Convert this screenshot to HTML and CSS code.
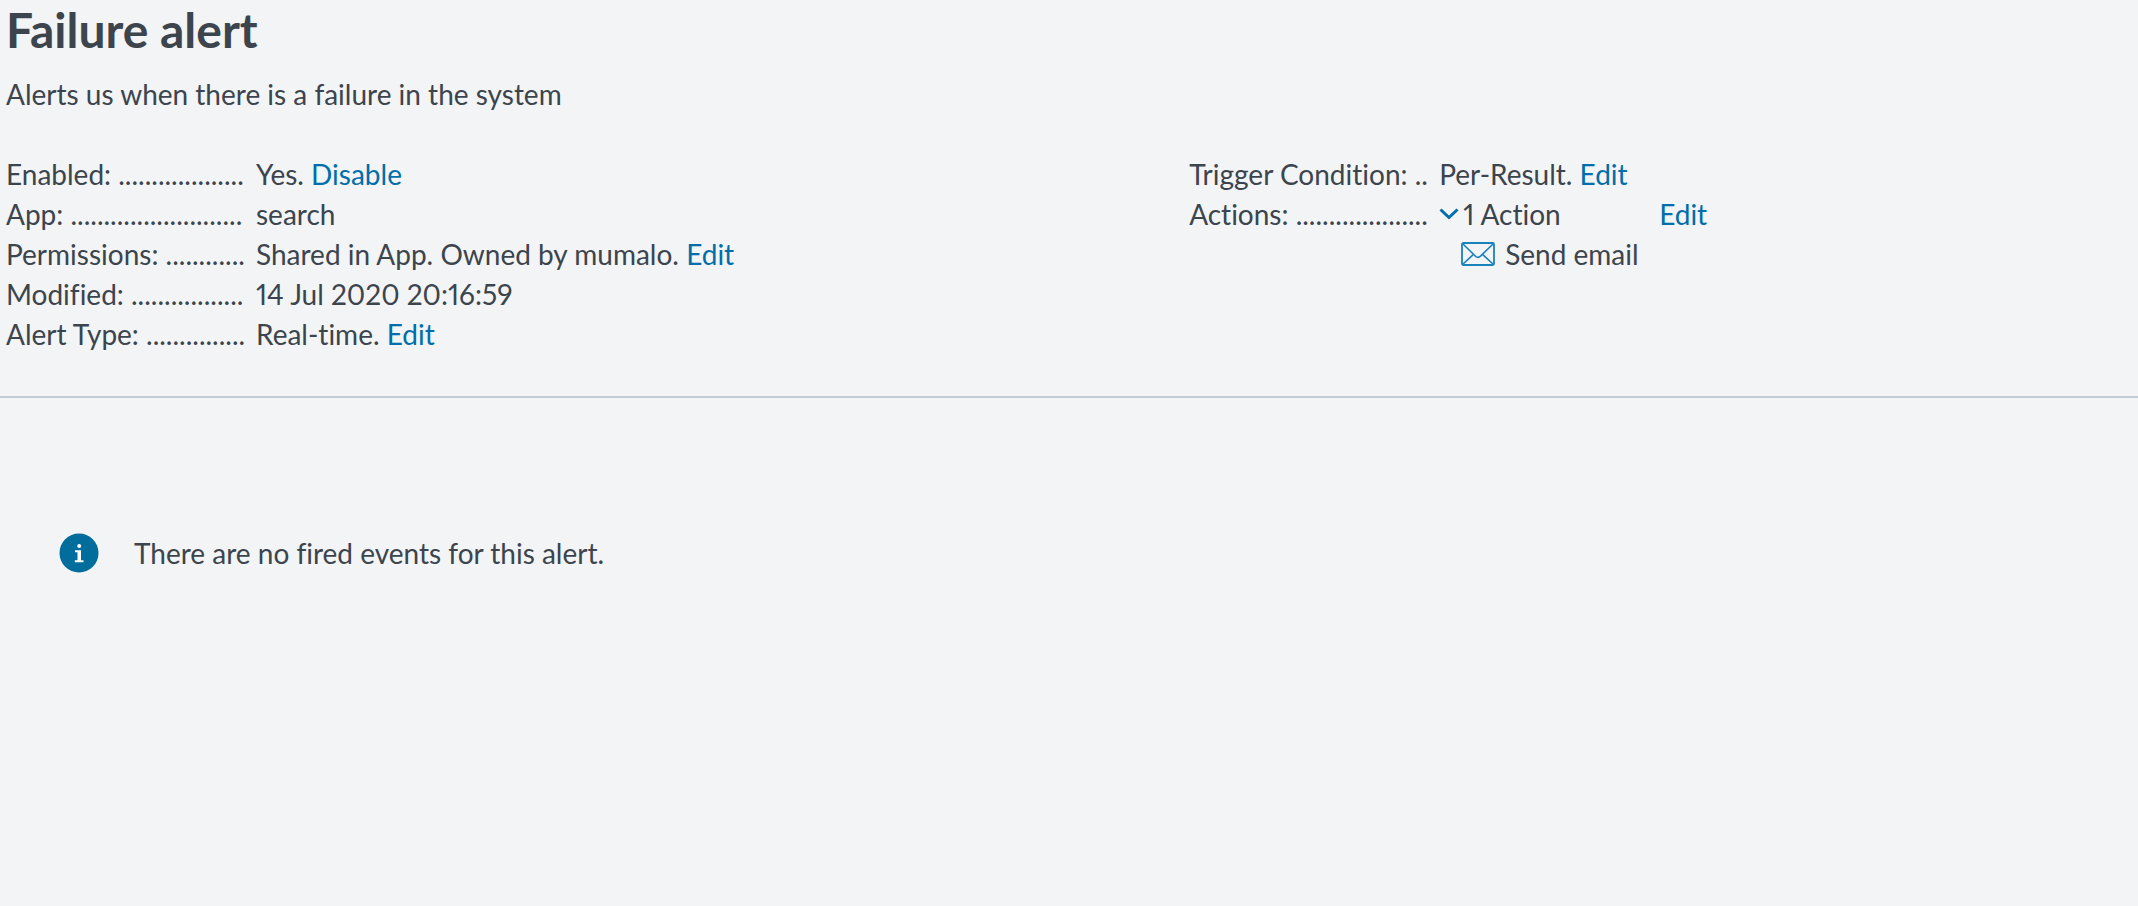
FILE: index.html
```html
<!DOCTYPE html>
<html lang="en">
<head>
<meta charset="utf-8">
<meta name="viewport" content="width=device-width, initial-scale=1">
<title>Failure alert</title>
<link rel="stylesheet" href="styles.css">
</head>
<body>
<header class="alert-header">
  <h1 class="alert-title">Failure alert</h1>
  <p class="alert-description">Alerts us when there is a failure in the system</p>
  <div class="details">
    <dl class="detail-list">
      <dt class="detail-label">Enabled: ...................</dt>
      <dd class="detail-value">Yes. <a class="link" href="#">Disable</a></dd>
      <dt class="detail-label">App: ..........................</dt>
      <dd class="detail-value">search</dd>
      <dt class="detail-label">Permissions: ............</dt>
      <dd class="detail-value">Shared in App. Owned by mumalo. <a class="link" href="#">Edit</a></dd>
      <dt class="detail-label">Modified: .................</dt>
      <dd class="detail-value">14 Jul 2020 20:16:59</dd>
      <dt class="detail-label">Alert Type: ...............</dt>
      <dd class="detail-value">Real-time. <a class="link" href="#">Edit</a></dd>
    </dl>
    <dl class="detail-list">
      <dt class="detail-label">Trigger Condition: ..</dt>
      <dd class="detail-value">Per-Result. <a class="link" href="#">Edit</a></dd>
      <dt class="detail-label">Actions: ....................</dt>
      <dd class="detail-value">
        <div class="action-row">
          <button class="action-toggle" type="button" aria-expanded="true">
            <svg class="chevron" viewBox="0 0 20 12" aria-hidden="true"><path d="M1.500 1.500 10 9.500 18.500 1.500" fill="none" stroke="currentColor" stroke-width="3"/></svg>
            <span>1 Action</span>
          </button>
          <a class="link" href="#">Edit</a>
        </div>
        <div class="action-item">
          <svg class="envelope" viewBox="0 0 34 24" fill="none" stroke="currentColor" aria-hidden="true"><rect x="1" y="1" width="32" height="22" rx="1.500" stroke-width="1.800"/><path d="M1.500 1.500 14.500 14.200Q17 16.600 19.500 14.200L32.500 1.500M1.500 22.500 12.500 12.300M32.500 22.500 21.500 12.300" stroke-width="1.600"/></svg>
          <span>Send email</span>
        </div>
      </dd>
    </dl>
  </div>
</header>
<main class="message" role="status">
  <svg class="info" viewBox="0 0 40 40" aria-hidden="true"><circle cx="20" cy="20" r="19.500" fill="#006d9c"/><circle cx="20.200" cy="13" r="2" fill="#fff"/><path d="M16 17.200h6v10h2.500v2h-8.700v-2h2.700v-8h-2.500z" fill="#fff"/></svg>
  <p class="message-text">There are no fired events for this alert.</p>
</main>
</body>
</html>
```
FILE: styles.css
```css
body {
  margin: 0;
  background: #f2f4f5;
  color: #3c444d;
  font: 28px/40px Lato, "Open Sans", sans-serif;
  font-variant-ligatures: none;
  font-variant-numeric: proportional-nums;
}

h1, p, dl, dd {
  margin: 0;
}

.alert-header {
  padding: 0 6px 42px;
  border-bottom: 2px solid #c3cbd4;
}

.alert-title {
  font-size: 48px;
  line-height: 60px;
}

.alert-description {
  padding: 14px 0 40px;
}

.details {
  display: grid;
  grid-template-columns: 64fr 51fr;
}

.detail-list {
  display: grid;
  grid-template-columns: 240px 1fr;
  column-gap: 10px;
  align-content: start;
}

.detail-label {
  white-space: nowrap;
}

.link {
  color: #006eaa;
  text-decoration: none;
}

.link:hover {
  text-decoration: underline;
}

.action-row {
  display: flex;
  width: 268px;
  justify-content: space-between;
}

.action-toggle {
  display: flex;
  align-items: center;
  gap: 4px;
  padding: 0;
  border: 0;
  background: none;
  color: inherit;
  font: inherit;
  font-variant-ligatures: inherit;
  font-variant-numeric: inherit;
  cursor: pointer;
}

.chevron {
  width: 20px;
  height: 12px;
  color: #006eaa;
}

.action-item {
  display: flex;
  align-items: center;
  gap: 10px;
  padding-left: 22px;
}

.envelope {
  width: 34px;
  height: 24px;
  color: #1a82bd;
}

.message {
  display: flex;
  align-items: center;
  gap: 35px;
  padding: 135px 59px;
}

.info {
  flex: none;
  width: 40px;
  height: 40px;
}
```
